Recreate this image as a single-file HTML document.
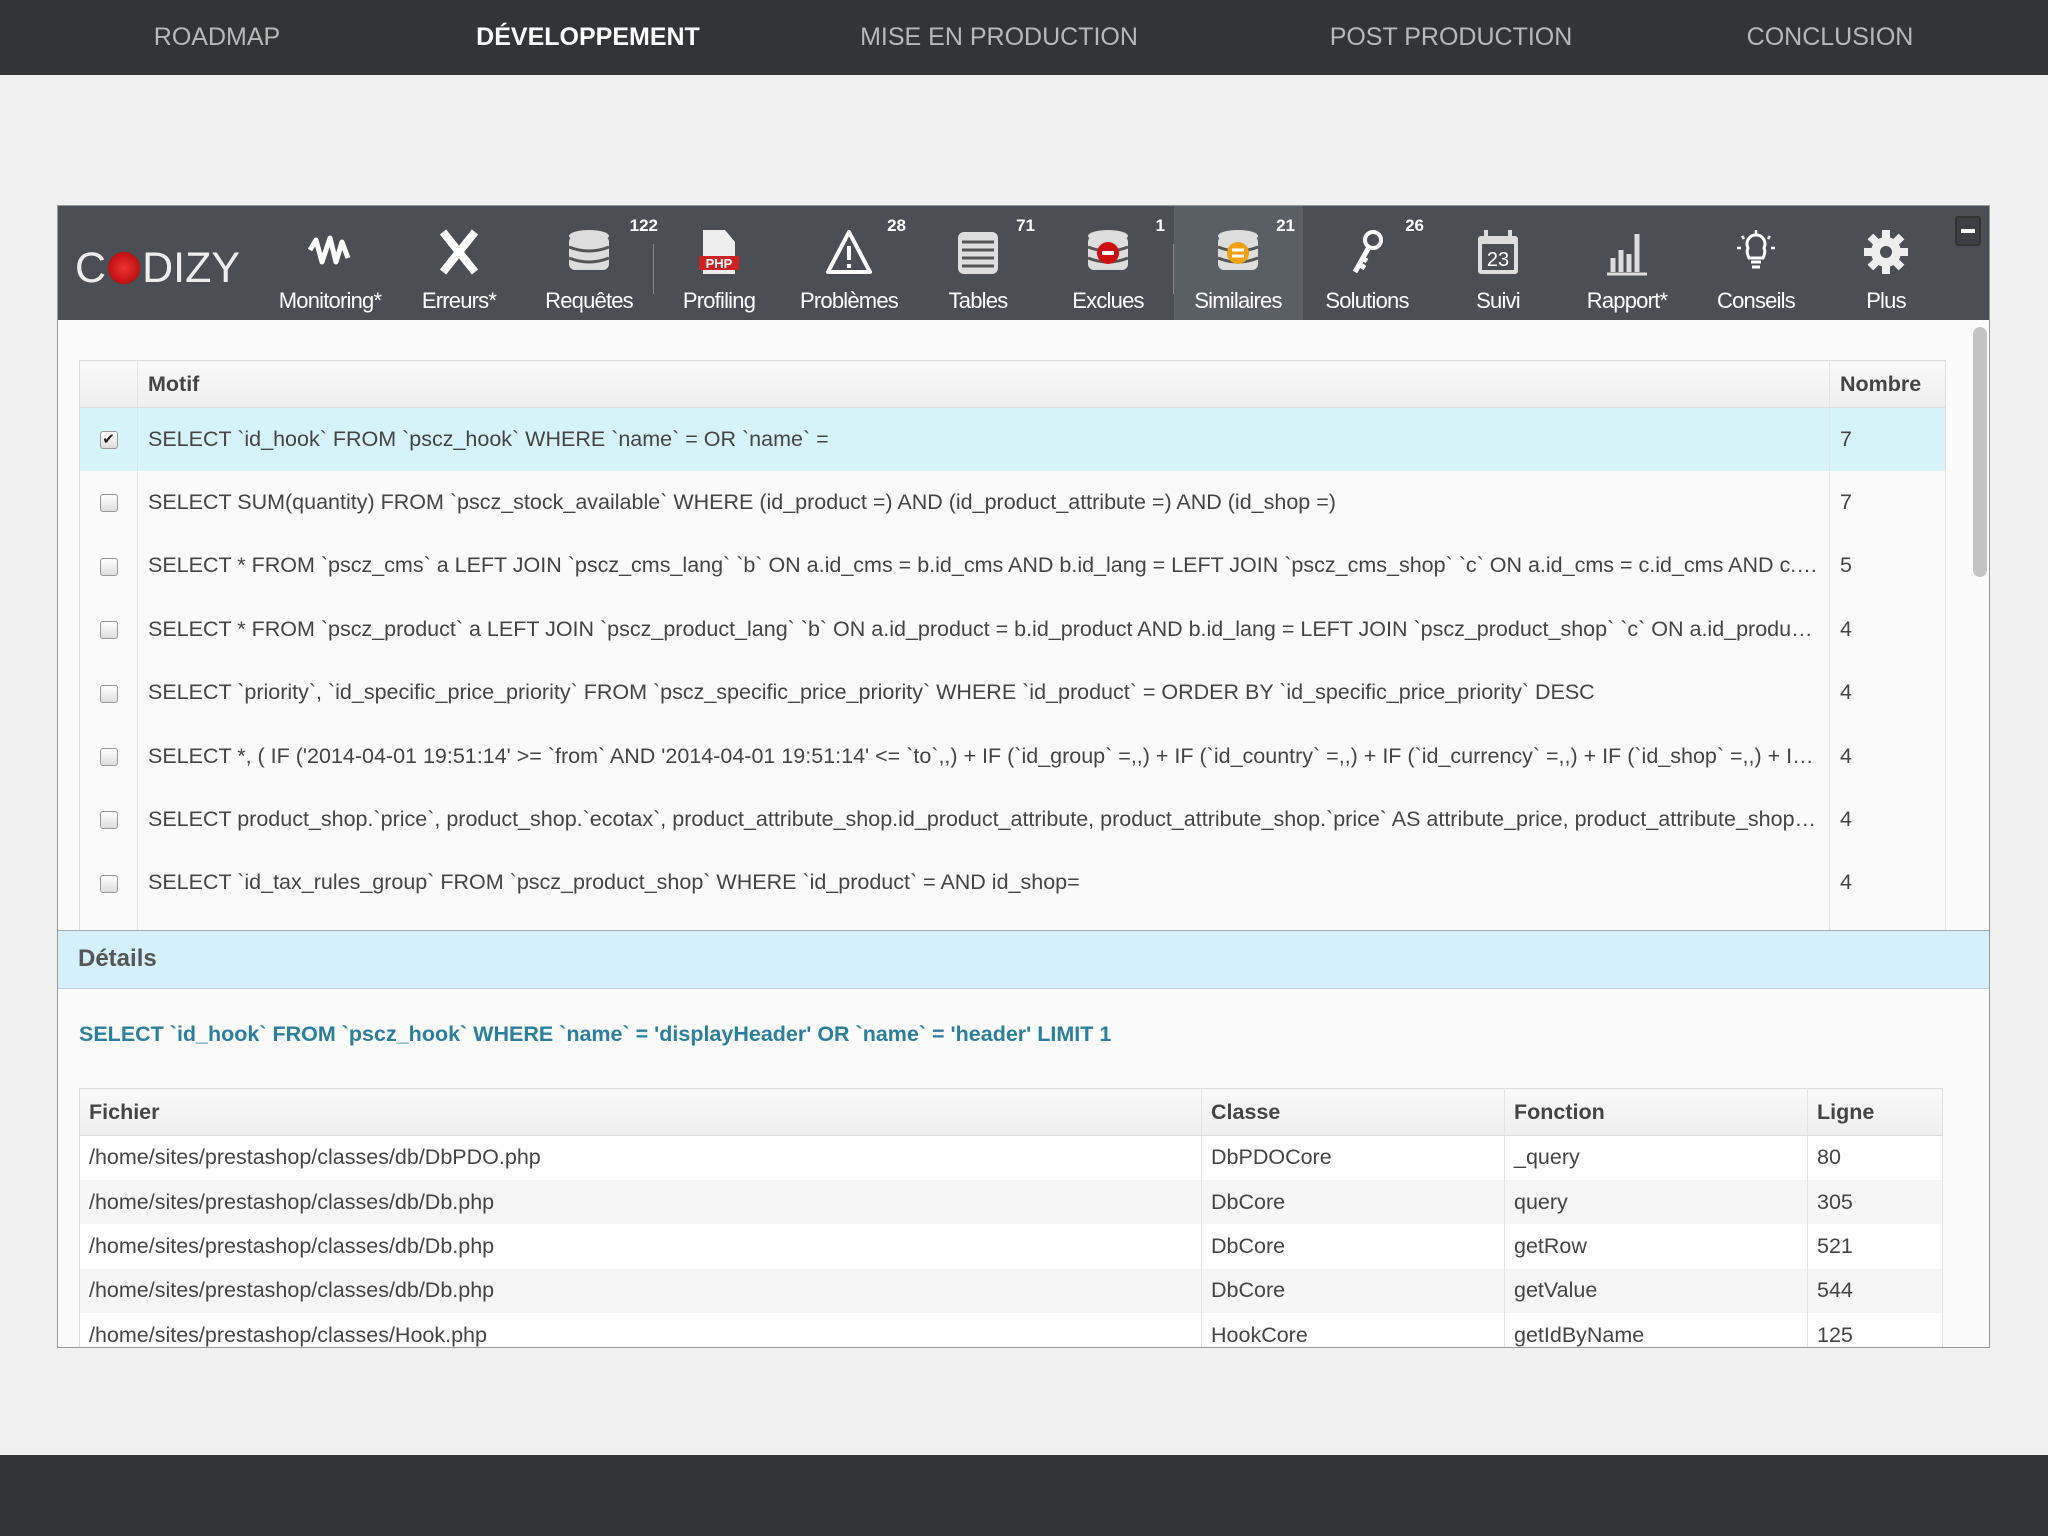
<!DOCTYPE html>
<html><head><meta charset="utf-8"><style>
*{margin:0;padding:0;box-sizing:border-box}
body{width:2048px;height:1536px;background:#f0f0f0;font-family:"Liberation Sans",sans-serif;position:relative;overflow:hidden;color:#444}
.top{position:absolute;left:0;top:0;width:2048px;height:75px;background:#333436}
.top span{position:absolute;top:23px;font-size:25px;color:#b8b8b8;transform:translateX(-50%);white-space:nowrap}
.top span.on{color:#fff;font-weight:bold}
.bot{position:absolute;left:0;top:1455px;width:2048px;height:81px;background:#333436}
.panel{position:absolute;left:57px;top:205px;width:1933px;height:1143px;background:#fbfbfb;border:1px solid #999;overflow:hidden}
.tb{position:absolute;left:0;top:0;width:1933px;height:114px;background:#4b4e54;z-index:3}
.it{position:absolute;top:0;width:130px;height:114px;transform:translateX(-50%);text-align:center}
.it .lb{position:absolute;left:0;right:0;top:82px;font-size:22px;color:#fff;letter-spacing:-0.8px}
.it svg{position:absolute;left:41px;top:22px}
.bd{position:absolute;top:10px;font-size:17px;color:#fff;font-weight:bold}
.logo{position:absolute;left:17px;top:38px;font-size:43px;color:#eee;letter-spacing:0;font-weight:normal}
table{border-collapse:collapse;table-layout:fixed}
.t1{position:absolute;left:21px;top:154px;width:1867px;border:1px solid #ddd;background:#fafafa}
.t1 td,.t1 th{height:63.4px;font-size:21.5px;letter-spacing:0;color:#444;border-right:1px solid #e3e3e3;white-space:nowrap;overflow:hidden;text-overflow:ellipsis;padding:0 10px}
.t1 th{height:47px;text-align:left;background:linear-gradient(#fafafa,#eee);border-bottom:1px solid #ddd}
.t1 tr.sel td{background:#d7f3fa}
.cb{display:inline-block;width:18px;height:18px;border:1px solid #999;border-radius:3px;background:linear-gradient(#fff,#ddd);vertical-align:middle;font-size:15px;line-height:16px;text-align:center;color:#222}
.det{position:absolute;left:0;top:724px;width:1933px;height:59px;background:#d4f1fb;border-top:1px solid #aab;border-bottom:1px solid #bcd;font-size:24px;font-weight:bold;color:#555;padding:14px 0 0 20px;z-index:2}
.low{position:absolute;left:0;top:783px;width:1933px;height:400px;background:#fbfbfb;z-index:2}
.sql{position:absolute;left:21px;top:33px;font-size:21.5px;font-weight:bold;color:#2b7f9e;letter-spacing:0;white-space:nowrap}
.t2{position:absolute;left:21px;top:99px;width:1864px;border:1px solid #ddd}
.t2 td,.t2 th{height:44.4px;font-size:21.5px;letter-spacing:0;color:#444;padding:0 9px;text-align:left;border-right:1px solid #e3e3e3}
.t2 th{height:47px;background:linear-gradient(#fafafa,#eee);border-bottom:1px solid #ddd}
.t2 tr:nth-child(odd) td{background:#f6f6f6}
.t2 tr:nth-child(even) td{background:#fff}
</style></head><body>
<div class="top">
<span style="left:217px">ROADMAP</span>
<span class="on" style="left:588px">DÉVELOPPEMENT</span>
<span style="left:999px">MISE EN PRODUCTION</span>
<span style="left:1451px">POST PRODUCTION</span>
<span style="left:1830px">CONCLUSION</span>
</div>
<div class="panel">
<div class="tb">
<div style="position:absolute;left:1116px;top:0;width:129px;height:114px;background:#5a5f66"></div>
<div style="position:absolute;left:595px;top:38px;width:1px;height:50px;background:#888"></div>
<div style="position:absolute;left:1115px;top:38px;width:1px;height:50px;background:#888"></div>
<div class="logo">C<span style="display:inline-block;width:32px;height:32px;border-radius:50%;background:radial-gradient(#e33,#a00);vertical-align:-2px;margin:0 2px"></span>DIZY</div>
<div class="it" style="left:272px"><svg width="48" height="48" viewBox="0 0 48 48"><path d="M4 22 L10 12 L16 34 L24 10 L30 34 L36 14 L42 30" fill="none" stroke="#fff" stroke-width="5" stroke-linejoin="round"/></svg><div class="lb">Monitoring*</div></div>
<div class="it" style="left:401px"><svg width="48" height="48" viewBox="0 0 48 48"><path d="M8 4 L40 44 M40 4 L8 44" stroke="#fff" stroke-width="8"/></svg><div class="lb">Erreurs*</div></div>
<div class="it" style="left:531px"><svg width="48" height="48" viewBox="0 0 48 48"><ellipse cx="24" cy="8" rx="20" ry="6" fill="#ddd"/><rect x="4" y="8" width="40" height="34" rx="6" fill="#ddd"/><path d="M4 19 Q24 27 44 19 M4 30 Q24 38 44 30" stroke="#555" stroke-width="3" fill="none"/></svg><div class="lb">Requêtes</div><div class="bd" style="right:-4px">122</div></div>
<div class="it" style="left:661px"><svg width="48" height="48" viewBox="0 0 48 48"><path d="M8 2 H30 L40 14 V46 H8 Z" fill="#eee"/><rect x="4" y="28" width="40" height="14" fill="#c22"/><text x="24" y="40" font-size="13" font-weight="bold" fill="#fff" text-anchor="middle" font-family="Liberation Sans">PHP</text></svg><div class="lb">Profiling</div></div>
<div class="it" style="left:791px"><svg width="48" height="48" viewBox="0 0 48 48"><path d="M24 4 L45 44 H3 Z" fill="none" stroke="#fff" stroke-width="4" stroke-linejoin="round"/><path d="M24 18 V32 M24 36 V40" stroke="#fff" stroke-width="4"/></svg><div class="lb">Problèmes</div><div class="bd" style="right:8px">28</div></div>
<div class="it" style="left:920px"><svg width="48" height="48" viewBox="0 0 48 48"><rect x="4" y="4" width="40" height="42" rx="6" fill="#ddd"/><path d="M8 14H40M8 22H40M8 30H40M8 38H40" stroke="#555" stroke-width="3"/></svg><div class="lb">Tables</div><div class="bd" style="right:8px">71</div></div>
<div class="it" style="left:1050px"><svg width="48" height="48" viewBox="0 0 48 48"><ellipse cx="24" cy="8" rx="20" ry="6" fill="#ddd"/><rect x="4" y="8" width="40" height="34" rx="6" fill="#ddd"/><path d="M4 19 Q24 27 44 19 M4 30 Q24 38 44 30" stroke="#555" stroke-width="3" fill="none"/><circle cx="24" cy="25" r="11" fill="#d01010"/><rect x="18" y="23" width="12" height="4" fill="#fff"/></svg><div class="lb">Exclues</div><div class="bd" style="right:8px">1</div></div>
<div class="it" style="left:1180px"><svg width="48" height="48" viewBox="0 0 48 48"><ellipse cx="24" cy="8" rx="20" ry="6" fill="#ddd"/><rect x="4" y="8" width="40" height="34" rx="6" fill="#ddd"/><path d="M4 19 Q24 27 44 19 M4 30 Q24 38 44 30" stroke="#555" stroke-width="3" fill="none"/><circle cx="24" cy="25" r="11" fill="#f0a010"/><path d="M18 22H30M18 28H30" stroke="#fff" stroke-width="3"/></svg><div class="lb">Similaires</div><div class="bd" style="right:8px">21</div></div>
<div class="it" style="left:1309px"><svg width="48" height="48" viewBox="0 0 48 48"><circle cx="30" cy="12" r="8" fill="none" stroke="#fff" stroke-width="4"/><path d="M26 19 L12 44 M16 36 L22 40 M19 30 L24 33" stroke="#fff" stroke-width="5"/></svg><div class="lb">Solutions</div><div class="bd" style="right:8px">26</div></div>
<div class="it" style="left:1440px"><svg width="48" height="48" viewBox="0 0 48 48"><rect x="4" y="8" width="40" height="38" rx="3" fill="#ddd"/><rect x="8" y="16" width="32" height="26" fill="#4b4e54"/><path d="M12 2V12M36 2V12" stroke="#ddd" stroke-width="4"/><text x="24" y="38" font-size="20" fill="#fff" text-anchor="middle" font-family="Liberation Sans">23</text></svg><div class="lb">Suivi</div></div>
<div class="it" style="left:1569px"><svg width="48" height="48" viewBox="0 0 48 48"><path d="M10 44V30M18 44V22M26 44V26M34 44V6" stroke="#ddd" stroke-width="5"/><path d="M4 46H44" stroke="#ddd" stroke-width="3"/></svg><div class="lb">Rapport*</div></div>
<div class="it" style="left:1698px"><svg width="48" height="48" viewBox="0 0 48 48"><path d="M17 30 Q14 24 16 20 A9 9 0 1 1 32 20 Q34 24 31 30 Z" fill="none" stroke="#fff" stroke-width="3"/><path d="M19 34H29M20 39H28" stroke="#fff" stroke-width="3"/><path d="M24 2V6M10 8L12 11M38 8L36 11M5 20H9M39 20H43" stroke="#fff" stroke-width="2.5"/></svg><div class="lb">Conseils</div></div>
<div class="it" style="left:1828px"><svg width="48" height="48" viewBox="0 0 48 48"><g fill="#eee"><circle cx="24" cy="24" r="15"/><rect x="20" y="2" width="8" height="44"/><rect x="2" y="20" width="44" height="8"/><rect x="20" y="2" width="8" height="44" transform="rotate(45 24 24)"/><rect x="20" y="2" width="8" height="44" transform="rotate(-45 24 24)"/></g><circle cx="24" cy="24" r="6" fill="#4b4e54"/></svg><div class="lb">Plus</div></div>
<div style="position:absolute;left:1897px;top:10px;width:26px;height:30px;border:2px solid #333;border-radius:3px;background:#3c3f44"><div style="margin:11px auto 0;width:14px;height:4px;background:#fff"></div></div>
</div>
<div style="position:absolute;left:1915px;top:121px;width:14px;height:250px;border-radius:7px;background:#c4c4c4"></div>
<table class="t1">
<colgroup><col style="width:58px"><col style="width:1692px"><col></colgroup>
<tr><th></th><th>Motif</th><th style="border-right:none">Nombre</th></tr>
<tr class="sel"><td style="text-align:center"><span class="cb">✔</span></td><td>SELECT `id_hook` FROM `pscz_hook` WHERE `name` = OR `name` =</td><td>7</td></tr>
<tr><td style="text-align:center"><span class="cb"></span></td><td>SELECT SUM(quantity) FROM `pscz_stock_available` WHERE (id_product =) AND (id_product_attribute =) AND (id_shop =)</td><td>7</td></tr>
<tr><td style="text-align:center"><span class="cb"></span></td><td>SELECT * FROM `pscz_cms` a LEFT JOIN `pscz_cms_lang` `b` ON a.id_cms = b.id_cms AND b.id_lang = LEFT JOIN `pscz_cms_shop` `c` ON a.id_cms = c.id_cms AND c.id_shop</td><td>5</td></tr>
<tr><td style="text-align:center"><span class="cb"></span></td><td>SELECT * FROM `pscz_product` a LEFT JOIN `pscz_product_lang` `b` ON a.id_product = b.id_product AND b.id_lang = LEFT JOIN `pscz_product_shop` `c` ON a.id_product = c.id_product AND c.id_shop</td><td>4</td></tr>
<tr><td style="text-align:center"><span class="cb"></span></td><td>SELECT `priority`, `id_specific_price_priority` FROM `pscz_specific_price_priority` WHERE `id_product` = ORDER BY `id_specific_price_priority` DESC</td><td>4</td></tr>
<tr><td style="text-align:center"><span class="cb"></span></td><td>SELECT *, ( IF ('2014-04-01 19:51:14' &gt;= `from` AND '2014-04-01 19:51:14' &lt;= `to`,,) + IF (`id_group` =,,) + IF (`id_country` =,,) + IF (`id_currency` =,,) + IF (`id_shop` =,,) + IF (`id_customer` =,,)</td><td>4</td></tr>
<tr><td style="text-align:center"><span class="cb"></span></td><td>SELECT product_shop.`price`, product_shop.`ecotax`, product_attribute_shop.id_product_attribute, product_attribute_shop.`price` AS attribute_price, product_attribute_shop.default_on</td><td>4</td></tr>
<tr><td style="text-align:center"><span class="cb"></span></td><td>SELECT `id_tax_rules_group` FROM `pscz_product_shop` WHERE `id_product` = AND id_shop=</td><td>4</td></tr>
<tr><td style="text-align:center"><span class="cb"></span></td><td>SELECT * FROM `pscz_tax_rule` WHERE id_tax_rules_group =</td><td>4</td></tr>
</table>
<div class="det">Détails</div>
<div class="low">
<div class="sql">SELECT `id_hook` FROM `pscz_hook` WHERE `name` = 'displayHeader' OR `name` = 'header' LIMIT 1</div>
<table class="t2">
<colgroup><col style="width:1122px"><col style="width:303px"><col style="width:303px"><col></colgroup>
<tr><th>Fichier</th><th>Classe</th><th>Fonction</th><th style="border-right:none">Ligne</th></tr>
<tr><td>/home/sites/prestashop/classes/db/DbPDO.php</td><td>DbPDOCore</td><td>_query</td><td>80</td></tr>
<tr><td>/home/sites/prestashop/classes/db/Db.php</td><td>DbCore</td><td>query</td><td>305</td></tr>
<tr><td>/home/sites/prestashop/classes/db/Db.php</td><td>DbCore</td><td>getRow</td><td>521</td></tr>
<tr><td>/home/sites/prestashop/classes/db/Db.php</td><td>DbCore</td><td>getValue</td><td>544</td></tr>
<tr><td>/home/sites/prestashop/classes/Hook.php</td><td>HookCore</td><td>getIdByName</td><td>125</td></tr>
</table>
</div>
</div>
<div class="bot"></div>
</body></html>
